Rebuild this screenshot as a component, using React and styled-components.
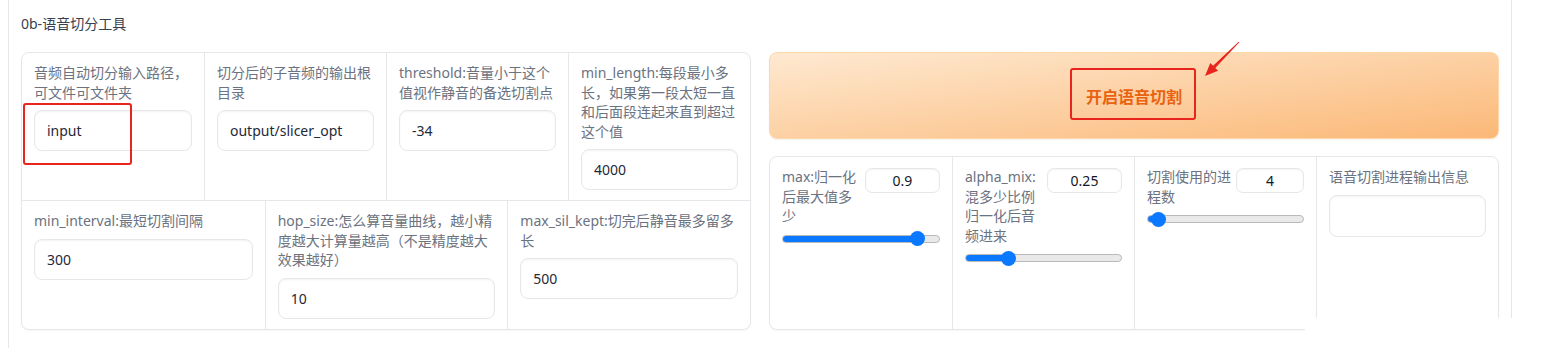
import React, { useState } from 'react';
import styled, { createGlobalStyle } from 'styled-components';

const GlobalStyle = createGlobalStyle`
  html, body { margin: 0; padding: 0; background: #fff; }
  body {
    font-family: "Noto Sans", "Noto Sans CJK SC", sans-serif;
    font-size: 14px;
    color: #374151;
  }
  * { box-sizing: border-box; }
`;

const Page = styled.div`
  position: relative;
  width: 1544px;
  height: 348px;
  overflow: hidden;
  padding-left: 8px;
`;

const Panel = styled.div`
  width: 1504px;
  min-height: 360px;
  border: 1px solid #e5e7eb;
  border-top: none;
  padding: 14px 12px 0;
`;

const Title = styled.div`
  line-height: 20px;
  color: #374151;
  margin-bottom: 18px;
`;

const Columns = styled.div`
  display: grid;
  grid-template-columns: 730px 730px;
  gap: 18px;
  align-items: stretch;
`;

const Card = styled.div`
  border: 1px solid #e5e7eb;
  border-radius: 8px;
  background: #fff;
  overflow: hidden;
  box-shadow: 0 1px 2px rgba(0, 0, 0, 0.04);
  display: flex;
  flex-direction: column;
  flex: ${(p) => (p.$grow ? 1 : 'none')};
`;

const Row = styled.div`
  display: grid;
  grid-template-columns: repeat(${(p) => p.$cols}, 1fr);
  border-bottom: ${(p) => (p.$divider ? '1px solid #e5e7eb' : 'none')};
  flex: ${(p) => (p.$grow ? 1 : 'none')};
`;

const Cell = styled.div`
  padding: 10px 12px;
  border-left: 1px solid #e5e7eb;
  &:first-child { border-left: none; }
`;

const Label = styled.div`
  color: #6b7280;
  line-height: 19.5px;
  margin-bottom: ${(p) => p.$gap ?? 8}px;
`;

const TextBox = styled.div`
  height: ${(p) => p.$h ?? 41}px;
  border: 1px solid #e5e7eb;
  border-radius: 8px;
  box-shadow: inset 0 1px 2px rgba(0, 0, 0, 0.05);
  padding: 0 12px;
  display: flex;
  align-items: center;
  color: #1f2937;
  background: #fff;
`;

const RightSide = styled.div`
  display: flex;
  flex-direction: column;
  gap: 17px;
`;

const StartButton = styled.button`
  height: 87px;
  width: 100%;
  border: 1px solid #fed7aa;
  border-radius: 8px;
  background: linear-gradient(to bottom right, #fee9d1, #fbb877);
  color: #e8620f;
  font-family: "Noto Sans CJK SC", sans-serif;
  font-size: 16px;
  font-weight: 600;
  cursor: pointer;
  box-shadow: 0 1px 2px rgba(0, 0, 0, 0.05);
`;

const SliderHead = styled.div`
  display: flex;
  align-items: flex-start;
  gap: 4px;
  margin-bottom: 9px;
`;

const SliderLabel = styled.div`
  flex: 1;
  color: #6b7280;
  line-height: 19.5px;
`;

const NumberBox = styled.div`
  width: ${(p) => p.$w}px;
  height: 25px;
  margin-top: 1px;
  border: 1px solid #e5e7eb;
  border-radius: 7px;
  box-shadow: inset 0 1px 2px rgba(0, 0, 0, 0.05);
  display: flex;
  align-items: center;
  justify-content: center;
  color: #111827;
`;

const Range = styled.input.attrs({ type: 'range' })`
  -webkit-appearance: none;
  appearance: none;
  display: block;
  width: 100%;
  height: 8px;
  margin: 4px 0;
  border-radius: 4px;
  border: 1px solid #b9b9b9;
  outline: none;

  &::-webkit-slider-thumb {
    -webkit-appearance: none;
    width: 15px;
    height: 15px;
    border-radius: 50%;
    background: #0a78ff;
    border: none;
  }
`;

const Overlay = styled.div`
  position: absolute;
  pointer-events: none;
`;

const MarkBox = styled(Overlay)`
  border: 2px solid #e8251d;
  border-radius: 3px;
`;

const Cover = styled(Overlay)`
  background: #fff;
`;

function Slider({ min, max, step, initial }) {
  const [value, setValue] = useState(initial);
  const p = (value - min) / (max - min);
  const stop = `calc(7.5px + ${p} * (100% - 15px))`;
  return (
    <Range
      min={min}
      max={max}
      step={step}
      value={value}
      onChange={(e) => setValue(Number(e.target.value))}
      style={{ background: `linear-gradient(to right, #0a78ff ${stop}, #e9e9e9 ${stop})` }}
    />
  );
}

const topFields = [
  { label: '音频自动切分输入路径，可文件可文件夹', value: 'input' },
  { label: '切分后的子音频的输出根目录', value: 'output/slicer_opt' },
  { label: 'threshold:音量小于这个值视作静音的备选切割点', value: '-34' },
  { label: 'min_length:每段最小多长，如果第一段太短一直和后面段连起来直到超过这个值', value: '4000' },
];

const bottomFields = [
  { label: 'min_interval:最短切割间隔', value: '300' },
  { label: 'hop_size:怎么算音量曲线，越小精度越大计算量越高（不是精度越大效果越好）', value: '10' },
  { label: 'max_sil_kept:切完后静音最多留多长', value: '500' },
];

const sliders = [
  { label: 'max:归一化后最大值多少', min: 0, max: 1, step: 0.05, value: 0.9, w: 75 },
  { label: 'alpha_mix:混多少比例归一化后音频进来', min: 0, max: 1, step: 0.05, value: 0.25, w: 75 },
  { label: '切割使用的进程数', min: 1, max: 160, step: 1, value: 4, w: 68 },
];

export default function App() {
  return (
    <>
      <GlobalStyle />
      <Page>
        <Panel>
          <Title>0b-语音切分工具</Title>
          <Columns>
            <Card>
              <Row $cols={4} $divider>
                {topFields.map((f) => (
                  <Cell key={f.label}>
                    <Label>{f.label}</Label>
                    <TextBox>{f.value}</TextBox>
                  </Cell>
                ))}
              </Row>
              <Row $cols={3}>
                {bottomFields.map((f) => (
                  <Cell key={f.label}>
                    <Label>{f.label}</Label>
                    <TextBox>{f.value}</TextBox>
                  </Cell>
                ))}
              </Row>
            </Card>

            <RightSide>
              <StartButton>开启语音切割</StartButton>
              <Card $grow>
                <Row $cols={4} $grow>
                  {sliders.map((s) => (
                    <Cell key={s.label}>
                      <SliderHead>
                        <SliderLabel>{s.label}</SliderLabel>
                        <NumberBox $w={s.w}>{s.value}</NumberBox>
                      </SliderHead>
                      <Slider min={s.min} max={s.max} step={s.step} initial={s.value} />
                    </Cell>
                  ))}
                  <Cell>
                    <Label $gap={8}>语音切割进程输出信息</Label>
                    <TextBox $h={42} />
                  </Cell>
                </Row>
              </Card>
            </RightSide>
          </Columns>
        </Panel>

        {/* screenshot annotations */}
        <MarkBox style={{ left: 23, top: 103, width: 109, height: 62 }} />
        <MarkBox style={{ left: 1070, top: 68, width: 126, height: 52 }} />
        <Overlay style={{ left: 1198, top: 38, width: 46, height: 44 }}>
          <svg width="46" height="44" viewBox="0 0 46 44">
            <polygon
              points="7,38 20.1,32.7 17.3,29.9 41.35,4.35 40.65,3.65 15.1,27.7 12.3,24.9"
              fill="#e8251d"
            />
          </svg>
        </Overlay>
        <Cover style={{ left: 1305, top: 318, width: 239, height: 30 }} />
      </Page>
    </>
  );
}
